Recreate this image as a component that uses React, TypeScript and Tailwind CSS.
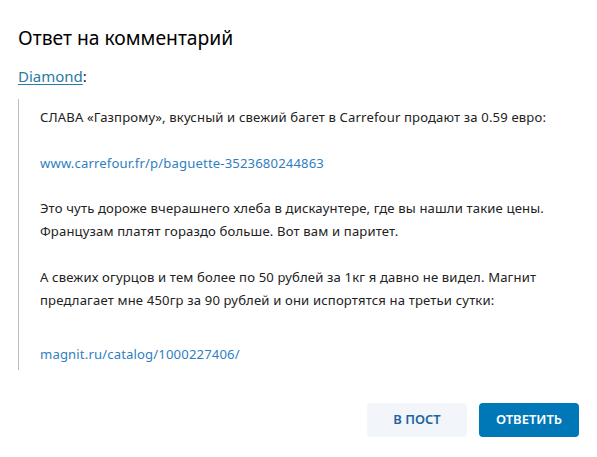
export default function App() {
  return (
    <div className="h-[457px] w-[597px] bg-white px-[18px] pt-[25px] font-['Noto_Sans',sans-serif] text-[#222]">
      <h1 className="text-[19.3px] leading-[26px] text-black">Ответ на комментарий</h1>

      <div className="mt-[14px] text-[15px] leading-[22px]">
        <a href="#" className="text-[#2a7ba3] underline underline-offset-2">
          Diamond
        </a>
        <span>:</span>
      </div>

      <blockquote className="mt-[12px] border-l border-[#bdbdbd] pl-[21px] pt-[7px] pb-[4px] text-[13.1px] leading-[23px] tracking-[0.15px] text-[#222]">
        <p>СЛАВА «Газпрому», вкусный и свежий багет в Carrefour продают за 0.59 евро:</p>
        <p className="mt-[23px]">
          <a href="#" className="text-[#2f7fc1]">
            www.carrefour.fr/p/baguette-3523680244863
          </a>
        </p>
        <p className="mt-[22px]">
          Это чуть дороже вчерашнего хлеба в дискаунтере, где вы нашли такие цены.
          <br />
          Французам платят гораздо больше. Вот вам и паритет.
        </p>
        <p className="mt-[23px]">
          А свежих огурцов и тем более по 50 рублей за 1кг я давно не видел. Магнит
          <br />
          предлагает мне 450гр за 90 рублей и они испортятся на третьи сутки:
        </p>
        <p className="mt-[31px]">
          <a href="#" className="text-[#2f7fc1]">
            magnit.ru/catalog/1000227406/
          </a>
        </p>
      </blockquote>

      <div className="mt-[33px] flex justify-end gap-3">
        <button className="h-[34px] w-[100px] rounded bg-[#f2f5fa] text-[13px] font-semibold text-[#24649c]">
          В ПОСТ
        </button>
        <button className="h-[34px] w-[100px] rounded bg-[#0077b6] text-[13px] font-semibold text-white">
          ОТВЕТИТЬ
        </button>
      </div>
    </div>
  );
}
